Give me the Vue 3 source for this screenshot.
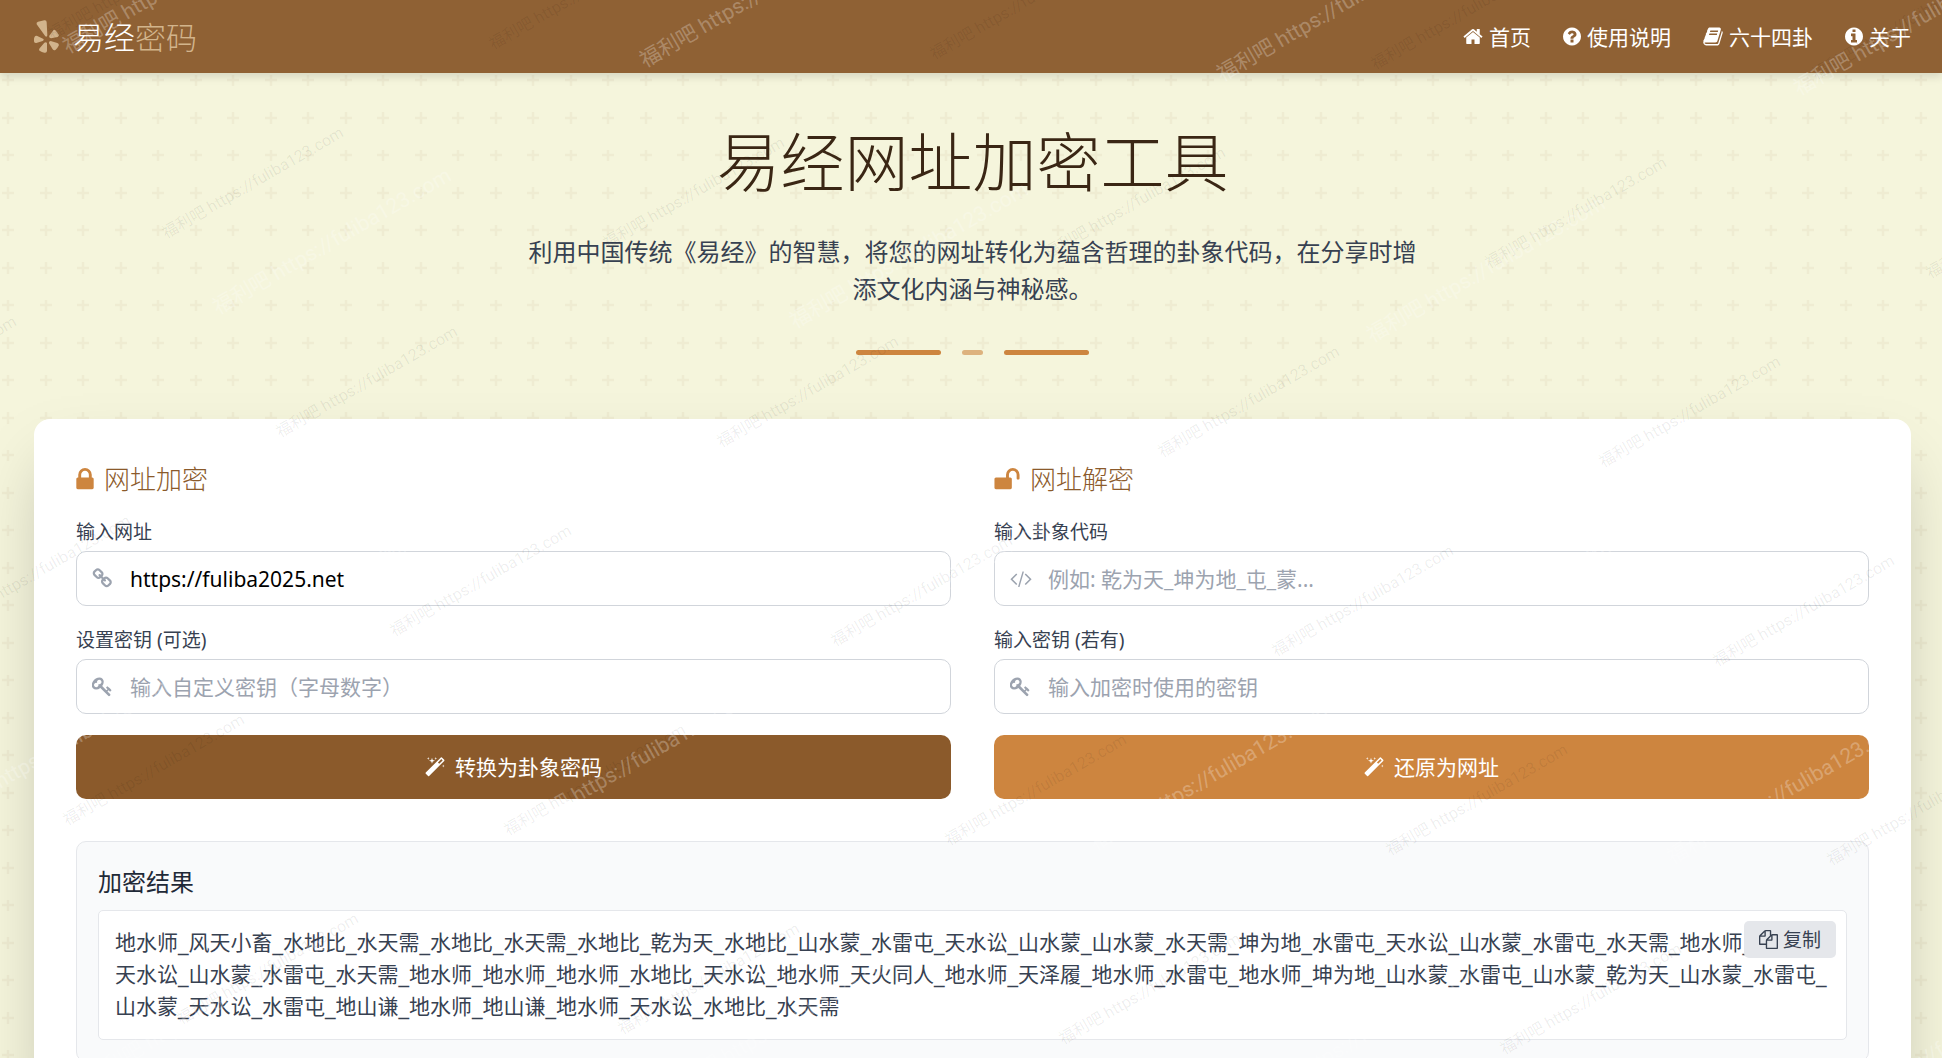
<template>
  <div class="page">
    <svg class="pattern" aria-hidden="true">
      <defs>
        <pattern id="plus" width="75" height="75" patternUnits="userSpaceOnUse">
          <path
            v-for="p in plusPoints"
            :key="p.join()"
            :d="`M${p[0] - 6} ${p[1]}h12M${p[0]} ${p[1] - 6}v12`"
            stroke="#8b5a2b"
            stroke-opacity="0.06"
            stroke-width="2.5"
          />
        </pattern>
      </defs>
      <rect width="100%" height="100%" fill="url(#plus)" />
    </svg>

    <header class="header">
      <a class="logo" href="#">
        <svg class="logo-icon" viewBox="0 0 75 99" aria-hidden="true">
          <path d="M8 13Q6 7 12 5L31 1Q38 0 38 7L40 46Q39 52 34 49Z" />
          <path d="M46 47L58 31Q61 28 64 31Q70 37 74 44Q76 49 71 51L51 55Q44 54 46 47Z" />
          <path d="M50 63L70 69Q76 71 74 77Q70 85 65 89Q60 93 56 88L45 70Q44 63 50 63Z" />
          <path d="M39 70V93Q38 100 31 98Q23 96 18 93Q13 90 17 85L31 68Q37 64 39 70Z" />
          <path d="M26 63L7 69Q0 70 0 64Q-1 56 2 50Q5 45 10 48L27 56Q32 60 26 63Z" />
        </svg>
        <span>易经<span class="logo-sub">密码</span></span>
      </a>
      <nav class="nav">
        <a v-for="item in navItems" :key="item.label" href="#">
          <svg :viewBox="icons[item.icon].box" :class="{ wide: item.wide }" aria-hidden="true">
            <path :d="icons[item.icon].d" />
          </svg>
          <span>{{ item.label }}</span>
        </a>
      </nav>
    </header>

    <main class="main">
      <section class="hero">
        <h1>易经网址加密工具</h1>
        <p>利用中国传统《易经》的智慧，将您的网址转化为蕴含哲理的卦象代码，在分享时增添文化内涵与神秘感。</p>
        <div class="divider"><i></i><i class="short"></i><i></i></div>
      </section>

      <section class="card">
        <div class="columns">
          <form v-for="form in forms" :key="form.title" class="form" @submit.prevent>
            <h2>
              <svg :viewBox="icons[form.icon].box" :class="form.icon" aria-hidden="true">
                <path :d="icons[form.icon].d" />
              </svg>
              {{ form.title }}
            </h2>
            <div v-for="field in form.fields" :key="field.id" class="field">
              <label :for="field.id">{{ field.label }}</label>
              <div class="control">
                <svg :viewBox="icons[field.icon].box" aria-hidden="true">
                  <path :d="icons[field.icon].d" />
                </svg>
                <input :id="field.id" v-model="values[field.id]" type="text" :placeholder="field.placeholder" />
              </div>
            </div>
            <button class="submit" :class="form.theme" type="submit">
              <svg :viewBox="icons.magic.box" aria-hidden="true"><path :d="icons.magic.d" /></svg>
              {{ form.action }}
            </button>
          </form>
        </div>

        <div class="result">
          <h3>加密结果</h3>
          <div class="code">
            <p v-for="line in resultLines" :key="line">{{ line }}</p>
            <button class="copy" type="button" @click="copy">
              <svg :viewBox="icons.copy.box" aria-hidden="true"><path :d="icons.copy.d" /></svg>
              复制
            </button>
          </div>
        </div>
      </section>
    </main>

    <svg class="watermark" aria-hidden="true">
      <text v-for="m in darkMarks" :key="m" class="dark" :transform="m">{{ markText }}</text>
      <text v-for="m in lightMarks" :key="m" class="light" :transform="m">{{ markText }}</text>
    </svg>
  </div>
</template>

<script setup>
import { reactive } from 'vue'

const circle = 'm640 416q0 209-103 385.5t-279.5 279.5-385.5 103-385.5-103-279.5-279.5-103-385.5 103-385.5 279.5-279.5 385.5-103 385.5 103 279.5 279.5 103 385.5z'

const icons = {
  home: {
    box: '64 0 1664 1792',
    d: 'M1472 992v480q0 26-19 45t-45 19h-384v-384h-256v384h-384q-26 0-45-19t-19-45v-480q0-1 .5-3t.5-3l575-474 575 474q1 2 1 6zm223-69l-62 74q-8 9-21 11h-3q-13 0-21-7l-692-577-692 577q-12 8-24 7-13-2-21-11l-62-74q-8-10-7-23.5t11-21.5l719-599q32-26 76-26t76 26l244 204v-195q0-14 9-23t23-9h192q14 0 23 9t9 23v408l219 182q10 8 11 21.5t-7 23.5z',
  },
  question: {
    box: '128 0 1536 1792',
    d: 'M1024 1376v-192q0-14-9-23t-23-9h-192q-14 0-23 9t-9 23v192q0 14 9 23t23 9h192q14 0 23-9t9-23zm256-672q0-88-55.5-163t-138.5-116-170-41q-243 0-371 213-15 24 8 42l132 100q7 6 19 6 16 0 25-12 53-68 86-92 34-24 86-24 48 0 85.5 26t37.5 59q0 38-20 61t-68 45q-63 28-115.5 86.5t-52.5 125.5v36q0 14 9 23t23 9h192q14 0 23-9t9-23q0-19 21.5-49.5t54.5-49.5q32-18 49-28.5t46-35 44.5-48 28-60.5 12.5-81zm384 192q0 209-103 385.5t-279.5 279.5-385.5 103-385.5-103-279.5-279.5-103-385.5 103-385.5 279.5-279.5 385.5-103 385.5 103 279.5 279.5 103 385.5z',
  },
  book: {
    box: '64 0 1664 1792',
    d: 'M1703 478q40 57 18 129l-275 906q-19 64-76.5 107.5t-122.5 43.5h-923q-77 0-148.5-53.5t-99.5-131.5q-24-67-2-127 0-4 3-27t4-37q1-8-3-21.5t-3-19.5q2-11 8-21t16.5-23.5 16.5-23.5q23-38 45-91.5t30-91.5q3-10 .5-30t-.5-28q3-11 17-28t17-23q21-36 42-92t25-90q1-9-2.5-32t.5-28q4-13 22-30.5t22-22.5q19-26 42.5-84.5t27.5-96.5q1-8-3-25.5t-2-26.5q2-8 9-18t18-23 17-21q8-12 16.5-30.5t15-35 16-36 19.5-32 26.5-23.5 36-11.5 47.5 5.5l-1 3q38-9 51-9h761q74 0 114 56t18 130l-274 906q-36 119-71.5 153.5t-128.5 34.5h-869q-27 0-38 15-11 16-1 43 24 70 144 70h923q29 0 56-15.5t35-41.5l300-987q7-22 5-57 38 15 59 43zm-1064 2q-4 13 2 22.5t20 9.5h608q13 0 25.5-9.5t16.5-22.5l21-64q4-13-2-22.5t-20-9.5h-608q-13 0-25.5 9.5t-16.5 22.5zm-83 256q-4 13 2 22.5t20 9.5h608q13 0 25.5-9.5t16.5-22.5l21-64q4-13-2-22.5t-20-9.5h-608q-13 0-25.5 9.5t-16.5 22.5z',
  },
  info: {
    box: '128 0 1536 1792',
    d: 'M1152 1376v-160q0-14-9-23t-23-9h-96v-512q0-14-9-23t-23-9h-320q-14 0-23 9t-9 23v160q0 14 9 23t23 9h96v320h-96q-14 0-23 9t-9 23v160q0 14 9 23t23 9h448q14 0 23-9t9-23zm-128-896v-160q0-14-9-23t-23-9h-192q-14 0-23 9t-9 23v160q0 14 9 23t23 9h192q14 0 23-9t9-23z' + circle,
  },
  lock: {
    box: '320 0 1152 1792',
    d: 'M640 768h512v-192q0-106-75-181t-181-75-181 75-75 181v192zm832 96v576q0 40-28 68t-68 28h-960q-40 0-68-28t-28-68v-576q0-40 28-68t68-28h32v-192q0-184 132-316t316-132 316 132 132 316v192h32q40 0 68 28t28 68z',
  },
  unlock: {
    box: '64 0 1664 1792',
    d: 'M1728 576v256q0 26-19 45t-45 19h-64q-26 0-45-19t-19-45v-256q0-106-75-181t-181-75-181 75-75 181v192h96q40 0 68 28t28 68v576q0 40-28 68t-68 28h-960q-40 0-68-28t-28-68v-576q0-40 28-68t68-28h672v-192q0-185 131.5-316.5t316.5-131.5 316.5 131.5 131.5 316.5z',
  },
  link: {
    box: '64 0 1792 1792',
    d: 'M1520 1216q0-40-28-68l-208-208q-28-28-68-28-42 0-72 32 3 3 19 18.5t21.5 21.5 15 19 13 25.5 3.5 27.5q0 40-28 68t-68 28q-15 0-27.5-3.5t-25.5-13-19-15-21.5-21.5-18.5-19q-33 31-33 73 0 40 28 68l206 207q27 27 68 27 40 0 68-26l147-146q28-28 28-67zm-703-705q0-40-28-68l-206-207q-28-28-68-28-39 0-68 27l-147 146q-28 28-28 67 0 40 28 68l208 208q27 27 68 27 42 0 72-31-3-3-19-18.5t-21.5-21.5-15-19-13-25.5-3.5-27.5q0-40 28-68t68-28q15 0 27.5 3.5t25.5 13 19 15 21.5 21.5 18.5 19q33-31 33-73zm895 705q0 120-85 203l-147 146q-83 83-203 83-121 0-204-85l-206-207q-83-83-83-203 0-123 88-209l-88-88q-86 88-208 88-120 0-204-84l-208-208q-84-84-84-204t85-203l147-146q83-83 203-83 121 0 204 85l206 207q83 83 83 203 0 123-88 209l88 88q86-88 208-88 120 0 204 84l208 208q84 84 84 204z',
  },
  key: {
    box: '64 0 1792 1792',
    d: 'M832 512q0-80-56-136t-136-56-136 56-56 136q0 42 19 83-41-19-83-19-80 0-136 56t-56 136 56 136 136 56 136-56 56-136q0-42-19-83 41 19 83 19 80 0 136-56t56-136zm851 704q0 17-49 66t-66 49q-9 0-28.5-16t-36.5-33-38.5-40-24.5-26l-96 96 220 220q28 28 28 68 0 42-39 81t-81 39q-40 0-68-28l-671-671q-176 131-365 131-163 0-265.5-102.5t-102.5-265.5q0-160 95-313t248-248 313-95q163 0 265.5 102.5t102.5 265.5q0 189-131 365l355 355 96-96q-3-3-26-24.5t-40-38.5-33-36.5-16-28.5q0-17 49-66t66-49q13 0 23 10 6 6 46 44.5t82 79.5 86.5 86 73 78 28.5 41z',
  },
  code: {
    box: '-64 0 1920 1792',
    d: 'M553 1399l-50 50q-10 10-23 10t-23-10l-466-466q-10-10-10-23t10-23l466-466q10-10 23-10t23 10l50 50q10 10 10 23t-10 23l-393 393 393 393q10 10 10 23t-10 23zm591-1067l-373 1291q-4 13-15.5 19.5t-23.5 2.5l-62-17q-13-4-19.5-15.5t-2.5-24.5l373-1291q4-13 15.5-19.5t23.5-2.5l62 17q13 4 19.5 15.5t2.5 24.5zm657 651l-466 466q-10 10-23 10t-23-10l-50-50q-10-10-10-23t10-23l393-393-393-393q-10-10-10-23t10-23l50-50q10-10 23-10t23 10l466 466q10 10 10 23t-10 23z',
  },
  magic: {
    box: '64 0 1664 1792',
    d: 'M1254 581l293-293-107-107-293 293zm447-293q0 27-18 45l-1286 1286q-18 18-45 18t-45-18l-198-198q-18-18-18-45t18-45l1286-1286q18-18 45-18t45 18l198 198q18 18 18 45zm-1351-190l98 30-98 30-30 98-30-98-98-30 98-30 30-98zm350 162l196 60-196 60-60 196-60-196-196-60 196-60 60-196zm930 478l98 30-98 30-30 98-30-98-98-30 98-30 30-98zm-640-640l98 30-98 30-30 98-30-98-98-30 98-30 30-98z',
  },
  copy: {
    box: '0 0 1792 1792',
    d: 'M1696 384q40 0 68 28t28 68v1216q0 40-28 68t-68 28h-960q-40 0-68-28t-28-68v-288h-544q-40 0-68-28t-28-68v-672q0-40 20-88t48-76l408-408q28-28 76-48t88-20h416q40 0 68 28t28 68v328q68-40 128-40h416zm-544 213l-299 299h299v-299zm-640-384l-299 299h299v-299zm196 647l316-316v-416h-384v416q0 40-28 68t-68 28h-416v640h512v-256q0-40 20-88t48-76zm956 804v-1152h-384v416q0 40-28 68t-68 28h-416v640h896z',
  },
}

const navItems = [
  { label: '首页', icon: 'home', wide: true },
  { label: '使用说明', icon: 'question' },
  { label: '六十四卦', icon: 'book', wide: true },
  { label: '关于', icon: 'info' },
]

const forms = [
  {
    title: '网址加密',
    icon: 'lock',
    action: '转换为卦象密码',
    theme: 'primary',
    fields: [
      { id: 'url', label: '输入网址', icon: 'link', placeholder: '' },
      { id: 'key', label: '设置密钥 (可选)', icon: 'key', placeholder: '输入自定义密钥（字母数字）' },
    ],
  },
  {
    title: '网址解密',
    icon: 'unlock',
    action: '还原为网址',
    theme: 'secondary',
    fields: [
      { id: 'gua', label: '输入卦象代码', icon: 'code', placeholder: '例如: 乾为天_坤为地_屯_蒙...' },
      { id: 'guaKey', label: '输入密钥 (若有)', icon: 'key', placeholder: '输入加密时使用的密钥' },
    ],
  },
]

const values = reactive({ url: 'https://fuliba2025.net', key: '', gua: '', guaKey: '' })

const resultLines = [
  '地水师_风天小畜_水地比_水天需_水地比_水天需_水地比_乾为天_水地比_山水蒙_水雷屯_天水讼_山水蒙_山水蒙_水天需_坤为地_水雷屯_天水讼_山水蒙_水雷屯_水天需_地水师_',
  '天水讼_山水蒙_水雷屯_水天需_地水师_地水师_地水师_水地比_天水讼_地水师_天火同人_地水师_天泽履_地水师_水雷屯_地水师_坤为地_山水蒙_水雷屯_山水蒙_乾为天_山水蒙_水雷屯_',
  '山水蒙_天水讼_水雷屯_地山谦_地水师_地山谦_地水师_天水讼_水地比_水天需',
]

function copy() {
  navigator.clipboard?.writeText(resultLines.join(''))
}

const plusPoints = [[8, 5], [46, 5], [8, 43], [46, 43]]

// two overlapping slanted grids of watermarks
const markText = '福利吧 https://fuliba123.com'

function marks(x0, y0, across, down) {
  const list = []
  for (let row = -1; row < 5; row++) {
    for (let col = -3; col < 5; col++) {
      const x = x0 + col * across[0] + row * down[0]
      const y = y0 + col * across[1] + row * down[1]
      if (x > -190 && x < 1940 && y < 1160) list.push(`translate(${x} ${y}) rotate(-30)`)
    }
  }
  return list
}

const darkMarks = marks(166, 239, [441, 10], [114, 199])
const lightMarks = marks(68, 54, [577, 14], [150, 261])
</script>

<style>
body {
  margin: 0;
  background: #f5f5dc;
}
</style>

<style scoped>
.page {
  position: relative;
  height: 100vh;
  overflow: hidden;
  font-family: 'Noto Sans', 'Noto Sans CJK SC', sans-serif;
  font-size: 21px;
  line-height: 32px;
  color: #374151;
}
.pattern,
.watermark {
  position: absolute;
  inset: 0;
  width: 100%;
  height: 100%;
  pointer-events: none;
}
.watermark {
  font-family: Roboto, 'Noto Sans CJK SC', sans-serif;
}
.dark {
  font-size: 16px;
  fill: rgba(0, 0, 0, 0.07);
}
.light {
  font-size: 21px;
  fill: rgba(255, 255, 255, 0.27);
}
svg {
  fill: currentColor;
  flex: none;
}
.header {
  position: relative;
  display: flex;
  align-items: center;
  justify-content: space-between;
  height: 73px;
  padding: 0 31px 0 34px;
  background: #8f6134;
  box-shadow: 0 4px 8px rgba(0, 0, 0, 0.12);
}
a {
  color: inherit;
  text-decoration: none;
}
.logo {
  display: flex;
  align-items: center;
  gap: 14px;
  color: #fff;
  font-size: 31px;
  font-weight: 300;
}
.logo-icon {
  width: 25px;
  height: 33px;
  fill: #d2b48c;
}
.logo-sub {
  color: #d2b48c;
}
.nav {
  display: flex;
  gap: 32px;
  color: #fff;
}
.nav a {
  display: flex;
  align-items: center;
  gap: 6px;
}
.nav svg {
  width: 18px;
  height: 21px;
}
.nav svg.wide {
  width: 20px;
}
.main {
  position: relative;
  padding: 53px 31px 42px 34px;
}
.hero {
  display: flex;
  flex-direction: column;
  align-items: center;
  text-align: center;
}
h1 {
  margin: 0 0 35px;
  font-size: 64px;
  font-weight: 300;
  line-height: 72px;
  color: #3a2614;
}
.hero p {
  max-width: 892px;
  margin: 0 0 43px;
  font-size: 24px;
  line-height: 37px;
}
.divider {
  display: flex;
  gap: 21px;
}
.divider i {
  width: 85px;
  height: 5px;
  border-radius: 3px;
  background: #cd853f;
}
.divider .short {
  width: 21px;
  opacity: 0.6;
}
.card {
  margin-top: 64px;
  padding: 42px;
  border-radius: 16px;
  background: #fff;
  box-shadow: 0 33px 66px -16px rgba(0, 0, 0, 0.25);
}
.columns {
  display: grid;
  grid-template-columns: 1fr 1fr;
  gap: 43px;
}
.form {
  display: flex;
  flex-direction: column;
  gap: 21px;
}
h2 {
  display: flex;
  align-items: center;
  gap: 10px;
  margin: 0;
  font-size: 26px;
  font-weight: 300;
  line-height: 37px;
  color: #8b5a2b;
}
h2 svg {
  height: 27px;
  fill: #cd853f;
}
.lock {
  width: 18px;
}
.unlock {
  width: 26px;
}
.field {
  display: flex;
  flex-direction: column;
  gap: 5px;
}
label {
  font-size: 19px;
  line-height: 27px;
}
.control {
  display: flex;
  align-items: center;
  gap: 16px;
  height: 53px;
  padding: 0 15px;
  border: 1px solid #d1d5db;
  border-radius: 10px;
  background: #fff;
}
.control svg {
  width: 22px;
  height: 21px;
  fill: #9ca3af;
}
input {
  flex: 1;
  min-width: 0;
  padding: 0;
  border: 0;
  outline: 0;
  background: none;
  font: inherit;
  color: #000;
}
input::placeholder {
  color: #9ca3af;
  opacity: 1;
}
button {
  display: flex;
  align-items: center;
  justify-content: center;
  border: 0;
  font: inherit;
  cursor: pointer;
}
.submit {
  gap: 10px;
  height: 64px;
  border-radius: 10px;
  color: #fff;
}
.submit svg {
  width: 20px;
  height: 21px;
}
.primary {
  background: #8b5a2b;
}
.secondary {
  background: #cd853f;
}
.result {
  margin-top: 42px;
  padding: 21px;
  border: 1px solid #e5e7eb;
  border-radius: 10px;
  background: #f9fafb;
}
h3 {
  margin: 0 0 10px;
  font-size: 24px;
  font-weight: 400;
  line-height: 37px;
  color: #1f2937;
}
.code {
  position: relative;
  padding: 16px;
  border: 1px solid #e5e7eb;
  border-radius: 5px;
  background: #fff;
  font-family: 'DejaVu Sans', 'Noto Sans CJK SC', sans-serif;
}
.code p {
  margin: 0;
  white-space: nowrap;
}
.copy {
  position: absolute;
  top: 10px;
  right: 10px;
  gap: 5px;
  height: 37px;
  padding: 0 15px;
  border-radius: 5px;
  background: #e5e7eb;
  font-size: 19px;
  color: #374151;
}
.copy svg {
  width: 19px;
  height: 19px;
}
</style>
